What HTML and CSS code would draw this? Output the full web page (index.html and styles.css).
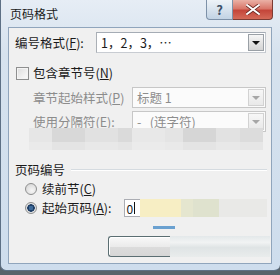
FILE: index.html
```html
<!DOCTYPE html>
<html lang="zh-CN">
<head>
    <meta charset="UTF-8">
    <title>页码格式</title>
    <link rel="stylesheet" href="styles.css">
</head>
<body>

<div class="window">
    <div class="titlebar">
        <span class="title">页码格式</span>
        <div class="caption-btns">
            <span class="cap help">?</span>
            <span class="cap close">
                <svg width="14" height="11" viewBox="0 0 14 11"><path d="M1 1 L13 10 M13 1 L1 10" stroke="#6b2a24" stroke-width="3.6" stroke-linecap="round"/><path d="M1 1 L13 10 M13 1 L1 10" stroke="#fff" stroke-width="2" stroke-linecap="round"/></svg>
            </span>
        </div>
    </div>

    <div class="client">
        <div class="row row-format">
            <span class="lbl lbl-format">编号格式(<u>F</u>):</span>
            <div class="combo combo-format">
                <span class="combo-text">1，2，3，…</span>
                <span class="drop"><i class="arrow"></i></span>
            </div>
        </div>

        <div class="row row-check">
            <span class="checkbox"></span>
            <span class="lbl">包含章节号(<u>N</u>)</span>
        </div>

        <div class="row row-sub">
            <span class="lbl dim lbl-sub">章节起始样式(<u>P</u>)</span>
            <div class="combo combo-sub disabled">
                <span class="combo-text">标题 1</span>
                <span class="drop"><i class="arrow"></i></span>
            </div>
        </div>

        <div class="row row-sub row-sep">
            <span class="lbl dim lbl-sub">使用分隔符(<u>E</u>):</span>
            <div class="combo combo-sub disabled">
                <span class="combo-text">-&nbsp;&nbsp;&nbsp;(连字符)</span>
                <span class="drop"><i class="arrow"></i></span>
            </div>
        </div>

        <div class="mosaic"></div>

        <div class="group-head">
            <span class="lbl">页码编号</span>
            <span class="group-line"></span>
        </div>

        <div class="row row-radio">
            <span class="radio"></span>
            <span class="lbl">续前节(<u>C</u>)</span>
        </div>

        <div class="row row-radio row-start">
            <span class="radio checked"></span>
            <span class="lbl">起始页码(<u>A</u>):</span>
            <span class="spin">0<i class="caret"></i></span>
            <span class="smear"></span>
        </div>

        <div class="focus-smear"></div>

        <div class="btn">
            <span class="btn-face"></span>
            <span class="btn-smear"></span>
        </div>
    </div>
</div>

</body>
</html>
```

FILE: styles.css
```css
* { box-sizing: border-box; }
body { margin: 0; width: 280px; height: 275px; overflow: hidden; background: #58636b; font-family: "Noto Sans CJK SC", "Microsoft YaHei", sans-serif; font-size: 12.5px; color: #1b1b1b; }

/* Window frame */
.window { width: 280px; height: 271px; display: flex; flex-direction: column; padding: 0 8px 6px 7px; background: linear-gradient(180deg, #e6edf5 0%, #d6e2ee 20%, #cedded 100%); border: 1px solid #5d7085; border-right: none; border-top: none; border-radius: 0 0 6px 6px; }

.titlebar { height: 27px; display: flex; justify-content: space-between; align-items: flex-start; }
.title { margin: 6px 0 0 2px; font-size: 12px; line-height: 16px; color: #1a1a1a; }
.caption-btns { display: flex; margin-right: -1px; }
.cap { height: 20px; display: flex; align-items: center; justify-content: center; }
.help { width: 27px; border: 1px solid #7d91a8; border-top: none; border-radius: 0 0 0 4px; background: linear-gradient(180deg, #eef3f8 0%, #d8e3ee 50%, #c2d3e4 100%); color: #3e5168; font-weight: bold; font-size: 13px; line-height: 1; }
.close { width: 40px; border: 1px solid #7c3b33; border-left: none; border-top: none; border-radius: 0 0 4px 0; background: linear-gradient(180deg, #eab1a6 0%, #d9776a 45%, #c4463a 55%, #d46a58 100%); }

/* Client area */
.client { flex: 1; display: flex; flex-direction: column; padding: 0 0 0 6px; background: #f0f0f0; border: 1px solid #90a5bc; }

.row { display: flex; align-items: center; }
.lbl { white-space: nowrap; line-height: 16px; }
.lbl u { text-decoration: underline; }
.dim { color: #8c8c8c; }

.row-format { margin-top: 4px; }
.lbl-format { width: 81px; }

.combo { height: 21px; display: flex; align-items: center; justify-content: space-between; background: #fff; border: 1px solid #8e8f8f; padding: 0 1px 0 4px; }
.combo-format { width: 170px; border-color: #a5acb5 #c2c7cd #c8ccd2 #abb0b6; }
.combo-text { line-height: 16px; white-space: nowrap; }
.drop { width: 16px; height: 17px; display: flex; align-items: center; justify-content: center; border: 1px solid #9aa0a6; background: linear-gradient(180deg, #f6f6f6 0%, #e4e4e4 50%, #d4d4d4 100%); }
.arrow { width: 0; height: 0; border-left: 4px solid transparent; border-right: 4px solid transparent; border-top: 4px solid #111; }

.row-check { height: 14px; margin-top: 13px; }
.checkbox { width: 13px; height: 13px; margin: 0 4px 0 1px; border: 1px solid #8e8f8f; background: linear-gradient(135deg, #dcdcdc 0%, #f3f3f3 70%, #fafafa 100%); box-shadow: inset 0 0 0 1px #f4f4f4; }

.row-sub { margin-top: 7px; justify-content: space-between; padding-right: 5px; padding-left: 18px; }
.row-sep { margin-top: 3px; }
.combo-sub { width: 134px; }
.disabled { background: #fbfbfb; border-color: #c7c7c7; color: #8d8d8d; }
.disabled .drop { border-color: #d2d2d2; background: linear-gradient(180deg, #f7f7f7, #e9e9e9); }
.disabled .arrow { border-top-color: #a6a6a6; }

/* pixelated (blurred) strip of the source */
.mosaic { height: 22px; margin: -4px 8px 0 14px; background:
    linear-gradient(90deg, #e6e6e6 0 10%, #d8d8d8 10% 24%, #e1e1e1 24% 38%, #dadada 38% 44%, #e8e8e8 44% 58%, #e4e4e4 58% 66%, #d6d6d6 66% 80%, #e2e2e2 80% 90%, #dcdcdc 90% 100%);
    box-shadow: inset 0 -8px 0 rgba(236,236,236,0.6); }

.group-head { display: flex; align-items: center; height: 16px; margin-top: 12px; gap: 6px; padding-right: 4px; }
.group-line { flex: 1; height: 2px; border-top: 1px solid #d5dbe0; border-bottom: 1px solid #fff; }

.row-radio { height: 16px; margin-top: 3px; padding-left: 10px; }
.row-start { height: 18px; margin-top: 2px; }
.radio { width: 12px; height: 12px; margin-right: 5px; border-radius: 50%; border: 1px solid #8e8f8f; background: radial-gradient(circle at 60% 65%, #f6f6f6 0%, #dcdcdc 70%); }
.radio.checked { background: radial-gradient(circle at 50% 50%, #3d6a9a 0 2px, #1f3f66 2.5px 3.5px, #e2e2e2 4px); }

.spin { width: 16px; height: 18px; margin-left: 12px; display: flex; align-items: center; padding-left: 2px; border: 1px solid #abadb3; border-right: none; background: #fff; font-size: 12px; }
.caret { width: 1px; height: 12px; background: #111; margin-left: 1px; }
.smear { flex: 1; height: 18px; margin-right: 4px; background: linear-gradient(90deg, #f7eec4 0 32%, #e5e6cf 32% 42%, #dfe2ce 42% 62%, #e9e9e7 62% 100%); }

.focus-smear { height: 3px; width: 22px; margin: 9px 0 0 138px; background: #3f87c6; opacity: 0.75; }

.btn { display: flex; height: 21px; margin: 7px 1px 0 93px; }
.btn-face { width: 62px; border: 1px solid #5b6e72; border-right: none; border-radius: 3px 0 0 3px; background: linear-gradient(180deg, #f8f8f8 0%, #ebebeb 50%, #dcdcdc 51%, #d6d6d6 100%); box-shadow: inset 1px 1px 0 #fff; }
.btn-smear { flex: 1; background: linear-gradient(180deg, #e3e8ea 0%, #f1f3f3 30%, #dfe4e5 55%, #e9ecec 100%); }
```
